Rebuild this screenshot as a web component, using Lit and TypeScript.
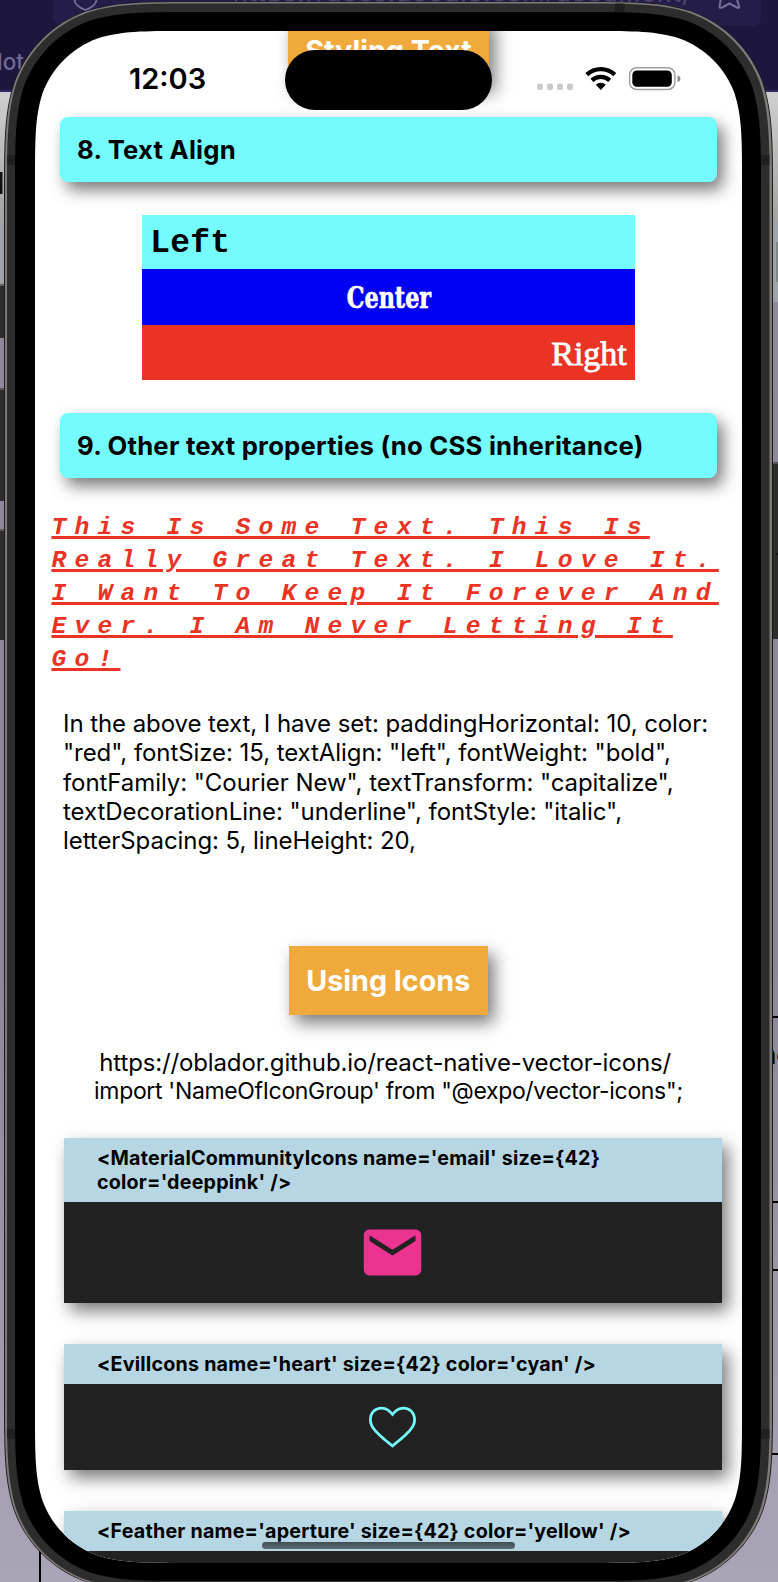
import { LitElement, html, css, svg } from "lit";
import { customElement, property } from "lit/decorators.js";

/** Rounded rectangle with continuous-curvature corners. */
function squircle(x: number, y: number, w: number, h: number, r: number): string {
  const a = 1.52866 * r, b = 1.08849 * r, c = 0.86841 * r, d = 0.63149 * r;
  const e = 0.07491 * r, f = 0.37282 * r, g = 0.16906 * r;
  const X = x + w, Y = y + h;
  return [
    `M${x + a} ${y}H${X - a}`,
    `C${X - b} ${y} ${X - c} ${y} ${X - d} ${y + e}`,
    `C${X - f} ${y + g} ${X - g} ${y + f} ${X - e} ${y + d}`,
    `C${X} ${y + c} ${X} ${y + b} ${X} ${y + a}`,
    `V${Y - a}`,
    `C${X} ${Y - b} ${X} ${Y - c} ${X - e} ${Y - d}`,
    `C${X - g} ${Y - f} ${X - f} ${Y - g} ${X - d} ${Y - e}`,
    `C${X - c} ${Y} ${X - b} ${Y} ${X - a} ${Y}`,
    `H${x + a}`,
    `C${x + b} ${Y} ${x + c} ${Y} ${x + d} ${Y - e}`,
    `C${x + f} ${Y - g} ${x + g} ${Y - f} ${x + e} ${Y - d}`,
    `C${x} ${Y - c} ${x} ${Y - b} ${x} ${Y - a}`,
    `V${y + a}`,
    `C${x} ${y + b} ${x} ${y + c} ${x + e} ${y + d}`,
    `C${x + g} ${y + f} ${x + f} ${y + g} ${x + d} ${y + e}`,
    `C${x + c} ${y} ${x + b} ${y} ${x + a} ${y}Z`,
  ].join("");
}

@customElement("desk-backdrop")
class DeskBackdrop extends LitElement {
  static styles = css`
    :host { display: block; }
    svg { display: block; }
    .tab { font: 500 22.500px Inter, sans-serif; fill: #6f6993; }
    .url { font: 500 24.500px Inter, sans-serif; fill: #4a446a; }
    .page { font: 700 27px Inter, sans-serif; fill: #0a0a0a; }
  `;
  render() {
    const rect = (x: number, y: number, w: number, h: number, fill: string) =>
      svg`<rect x=${x} y=${y} width=${w} height=${h} fill=${fill} />`;
    return html`<svg width="778" height="1582" viewBox="0 0 778 1582">
      <defs>
        <linearGradient id="pg" x1="0" y1="0" x2="0" y2="1">
          <stop offset="0" stop-color="#8f8b9b" /><stop offset=".6" stop-color="#8b8798" />
          <stop offset="1" stop-color="#a9a5b6" />
        </linearGradient>
        <linearGradient id="bar" x1="0" y1="0" x2="0" y2="1">
          <stop offset="0" stop-color="#cfcfcf" /><stop offset="1" stop-color="#a3a3a3" />
        </linearGradient>
      </defs>
      <rect width="778" height="1582" fill="url(#pg)" />
      ${rect(0, 0, 778, 92, "#1d173e")}
      <rect x="53" y="-20" width="708" height="46" rx="8" fill="#231d47" />
      ${rect(0, 90, 778, 2, "#2e2765")}
      <path d="M74.500 -4V0C75 5 80 8 85.500 10C91 8 96 5 96.500 0V-4" fill="none" stroke="#77719a" stroke-width="1.800" />
      <path d="M721 -2L719.500 6.500Q719.500 8.500 722 7.500L729.500 3.500L737 7.500Q739.500 8.500 739 6L736.500 -2" fill="none" stroke="#77719a" stroke-width="2" />
      <text class="url" x="233" y="1.800" textLength="458">https://docs.google.com/document/</text>
      <text class="tab" x="-3" y="70">lot</text>
      <rect y="92" width="20" height="130" fill="url(#bar)" />
      <rect x="760" y="92" width="18" height="130" fill="url(#bar)" />
      ${rect(0, 172, 2.5, 22, "#111")}
      ${rect(0, 222, 12, 62, "#a0a3a8")}
      ${rect(766, 222, 12, 80, "#a0a3a8")}
      ${rect(776, 242, 2, 40, "#818685")}
      ${rect(0, 284, 8, 54, "#2c2c2c")}
      ${rect(0, 284, 8, 2, "#666")}
      ${rect(0, 388, 8, 113, "#2c2c2c")}
      ${rect(0, 388, 8, 2, "#555")}
      ${rect(0, 529, 8, 111, "#2c2c2c")}
      ${rect(0, 529, 8, 2, "#555")}
      ${rect(770, 462, 8, 177, "#2c2c2c")}
      ${rect(770, 462, 8, 2, "#555")}
      ${rect(776, 553, 2, 2, "#151515")}
      ${rect(768, 1016, 10, 2, "#000")}
      ${rect(768, 1201, 10, 2, "#000")}
      ${rect(768, 1269, 10, 2, "#000")}
      ${rect(768, 1453, 10, 2, "#000")}
      ${rect(39, 1550, 2, 32, "#000")}
      <text class="page" x="759.500" y="1064">no</text>
    </svg>`;
  }
}

@customElement("phone-shell")
class PhoneShell extends LitElement {
  static styles = css`:host, svg { display: block; }`;
  render() {
    const notch = (x: number, y: number, w: number, h: number) =>
      svg`<rect x=${x} y=${y} width=${w} height=${h} fill="#202020" />`;
    return html`<svg width="778" height="1582" viewBox="0 0 778 1582">
      <path d=${squircle(4, 1.5, 769, 1590, 129)} fill="#1a1a1a" />
      <path d=${squircle(5, 2, 767, 1589, 128)} fill="#7d7c7b" />
      <path d=${squircle(7, 3.5, 762.5, 1586, 126)} fill="#2d2d2d" />
      ${notch(7, 155, 8.5, 10)}${notch(761, 155, 8.5, 10)}
      ${notch(7, 1429, 8.5, 10)}${notch(761, 1429, 8.5, 10)}
      ${notch(614.5, 3.5, 10, 10)}
      <path d=${squircle(15, 12, 746, 1569, 118)} fill="#000" />
    </svg>`;
  }
}

@customElement("section-heading")
class SectionHeading extends LitElement {
  static styles = css`
    :host {
      display: flex; align-items: center; height: 65px; padding-left: 17.500px; box-sizing: border-box;
      margin: 0 25px 0 24.500px; background: #73fbfd; border-radius: 8px; color: #000;
      box-shadow: 6px 8px 16px rgba(0, 0, 0, 0.52);
      font: 700 25.700px Inter, sans-serif; letter-spacing: 0.220px; white-space: nowrap;
    }
  `;
  render() { return html`<slot></slot>`; }
}

@customElement("chapter-badge")
class ChapterBadge extends LitElement {
  static styles = css`
    :host {
      display: flex; align-items: center; justify-content: center; height: 69px;
      background: #f0a93b; color: #fff; box-shadow: 6px 8px 16px rgba(0, 0, 0, 0.52);
      font: 700 28.700px Inter, sans-serif; white-space: nowrap;
    }
  `;
  render() { return html`<slot></slot>`; }
}

@customElement("icon-card")
class IconCard extends LitElement {
  @property({ attribute: false }) lines: string[] = [];
  static styles = css`
    :host { display: block; margin: 0 20.500px 0 29px; box-shadow: 6px 8px 16px rgba(0, 0, 0, 0.52); }
    .code {
      background: #b5d6e2; color: #000; padding: 9px 0 7.500px 33px;
      font: 700 19.700px/23.700px Inter, sans-serif; letter-spacing: 0.200px; white-space: nowrap;
    }
    .line { display: block; }
    .stage { background: #222; display: flex; justify-content: center; padding: 8.500px 0; min-height: 69px; }
    .tall .code { padding-bottom: 6.900px; }
    .tall .stage { padding: 16.100px 0; }
  `;
  render() {
    return html`<div class=${this.lines.length > 1 ? "tall" : ""}>
      <div class="code">${this.lines.map((l) => html`<span class="line">${l}</span>`)}</div>
      <div class="stage"><slot></slot></div>
    </div>`;
  }
}

@customElement("status-bar")
class StatusBar extends LitElement {
  static styles = css`
    :host { display: block; height: 86px; }
    .time { position: absolute; left: 94px; top: 30px; font: 600 29px/36px Inter, sans-serif; }
    .island { position: absolute; left: 250.200px; top: 19px; width: 206.500px; height: 59.500px; border-radius: 30px; background: #000; }
    .signals { position: absolute; left: 501px; top: 35px; }
  `;
  render() {
    return html`
      <div class="time">12:03</div>
      <div class="island"></div>
      <svg class="signals" width="146" height="26" viewBox="0 0 146 26">
        ${[1, 11, 21, 31].map((x) => svg`<rect x=${x} y="17.500" width="6" height="6.500" rx="2" fill="#cbcbcb" />`)}
        <g fill="none" stroke="#000" stroke-width="4.300">
          <path d="M50.800 8.600A20.500 20.500 0 0 1 78.800 8.600" />
          <path d="M55.900 14.400A13 13 0 0 1 73.700 14.400" />
        </g>
        <path d="M64.800 24L59.800 18.800A7 7 0 0 1 69.800 18.800Z" fill="#000" />
        <rect x="93.600" y="1.800" width="45.300" height="21.600" rx="7" fill="none" stroke="#a0a0a0" stroke-width="1.500" />
        <rect x="96.300" y="4.400" width="39.500" height="16.300" rx="4.500" fill="#000" />
        <path d="M141.500 9.200Q144.500 10.500 144.500 12.800Q144.500 15 141.500 16.200Z" fill="#8a8a8a" />
      </svg>`;
  }
}

@customElement("app-root")
class AppRoot extends LitElement {
  static styles = css`
    :host { display: grid; width: 778px; height: 1582px; overflow: hidden; background: #8f8b9b; }
    .layer { grid-area: 1 / 1; }
    .screen {
      grid-area: 1 / 1; position: relative; width: 707px; height: 1532px; margin: 31px 0 0 35px;
      overflow: hidden; background: #fff; color: #000; font-family: Inter, sans-serif;
    }
    .status { position: absolute; inset: 0 0 auto 0; z-index: 2; }
    .scroll { display: flex; flex-direction: column; }
    .first { width: 201px; margin: -15px 0 32px 253px; flex: none; }
    .aligns { width: 493px; margin: 33px 0 32.500px 107px; color: #fff; }
    .cell { box-sizing: border-box; padding: 0 8.200px; }
    .left { height: 53.700px; background: #73fbfd; color: #000; font: 700 32.900px/57px "Liberation Mono", monospace; letter-spacing: 0.300px; }
    .center { height: 56px; background: #0000f5; text-align: center; font: 700 30.500px/56px "DejaVu Serif", serif; -webkit-text-stroke: 0.700px #fff; }
    .narrow { display: inline-block; transform: scaleX(0.81); font-stretch: 75%; }
    .right { height: 55.800px; background: #ea3323; text-align: right; font: 400 34px/57px "Liberation Serif", serif; -webkit-text-stroke: 0.800px #fff; }
    .fancy {
      margin: 33px 0 0 16.400px; color: #ea3323; white-space: nowrap;
      font: italic 700 24.660px/32.900px "Liberation Mono", monospace; letter-spacing: 8.220px;
      text-decoration: underline; text-decoration-thickness: 2.500px; text-underline-offset: 2px;
    }
    .row { display: block; }
    .note { margin: 33.200px 0 0 28px; font-size: 24px; line-height: 29.400px; letter-spacing: -0.070px; white-space: nowrap; }
    .badge { width: 198.500px; margin: 90.300px 0 33.700px 254px; }
    .import { text-align: center; font-size: 24px; line-height: 28.700px; white-space: pre; margin-bottom: 32.300px; }
    .link { display: block; letter-spacing: -0.140px; }
    .statement { display: block; font-size: 23px; letter-spacing: -0.340px; }
    .gap { margin-bottom: 41px; }
    .home { position: absolute; left: 227px; top: 1510.700px; width: 253px; height: 7.700px; border-radius: 4px; background: linear-gradient(#3c464b, #566871); opacity: 0.95; z-index: 2; }
  `;

  render() {
    const fancy = ["This Is Some Text. This Is", "Really Great Text. I Love It.", "I Want To Keep It Forever And", "Ever. I Am Never Letting It", "Go!"];
    const note = [
      "In the above text, I have set: paddingHorizontal: 10, color:",
      "\"red\", fontSize: 15, textAlign: \"left\", fontWeight: \"bold\",",
      "fontFamily: \"Courier New\", textTransform: \"capitalize\",",
      "textDecorationLine: \"underline\", fontStyle: \"italic\",",
      "letterSpacing: 5, lineHeight: 20,",
    ];
    const row = (t: string) => html`<span class="row">${t}</span>`;
    return html`
      <desk-backdrop class="layer"></desk-backdrop>
      <phone-shell class="layer"></phone-shell>
      <div class="screen" style="clip-path: path('${squircle(0, 0, 707, 1532, 99)}')">
        <status-bar class="status"></status-bar>
        <div class="scroll">
          <chapter-badge class="first">Styling Text</chapter-badge>
          <section-heading>8. Text Align</section-heading>
          <div class="aligns">
            <div class="cell left">Left</div>
            <div class="cell center"><span class="narrow">Center</span></div>
            <div class="cell right">Right</div>
          </div>
          <section-heading>9. Other text properties (no CSS inheritance)</section-heading>
          <div class="fancy">${fancy.map(row)}</div>
          <div class="note">${note.map(row)}</div>
          <chapter-badge class="badge">Using Icons</chapter-badge>
          <div class="import"><span class="link">${"https://oblador.github.io/react-native-vector-icons/ "}</span><span class="statement">${"import 'NameOfIconGroup' from \"@expo/vector-icons\";"}</span></div>
          <icon-card class="gap" .lines=${["<MaterialCommunityIcons name='email' size={42}", "color='deeppink' />"]}>
            <svg width="69" height="69" viewBox="0 0 24 24" fill="#ea3490">
              <path d="M20,8L12,13L4,8V6L12,11L20,6M20,4H4C2.890,4 2,4.890 2,6V18A2,2 0 0,0 4,20H20A2,2 0 0,0 22,18V6C22,4.890 21.100,4 20,4Z" />
            </svg>
          </icon-card>
          <icon-card class="gap" .lines=${["<EvilIcons name='heart' size={42} color='cyan' />"]}>
            <svg width="69" height="69" viewBox="0 0 50 50" fill="#73fbfd">
              <path d="M25 39.700l-.6-.5C11.500 28.700 8 25 8 19c0-5 4-9 9-9 4.100 0 6.400 2.300 8 4.100 1.600-1.800 3.900-4.100 8-4.100 5 0 9 4 9 9 0 6-3.500 9.700-16.400 20.200l-.6.5zM17 12c-3.900 0-7 3.100-7 7 0 5.100 3.200 8.500 15 18.100 11.800-9.600 15-13 15-18.100 0-3.900-3.100-7-7-7-3.500 0-5.400 2.100-6.900 3.800L25 17.100l-1.100-1.300C22.400 14.100 20.500 12 17 12z" />
            </svg>
          </icon-card>
          <icon-card .lines=${["<Feather name='aperture' size={42} color='yellow' />"]}></icon-card>
        </div>
        <div class="home"></div>
      </div>
    `;
  }
}
